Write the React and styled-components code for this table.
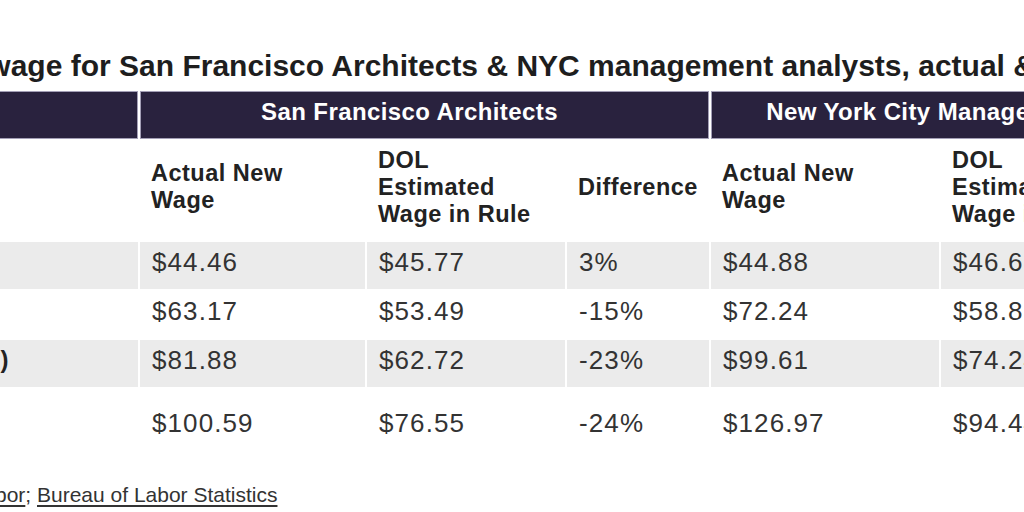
import React from "react";
import styled, { createGlobalStyle } from "styled-components";

const Global = createGlobalStyle`
  html, body { margin: 0; padding: 0; background: #fff; }
  body { width: 1024px; height: 512px; overflow: hidden; }
`;

const Page = styled.div`
  width: 1024px;
  height: 512px;
  overflow: hidden;
  padding-top: 48px;
  box-sizing: border-box;
  font-family: "Liberation Sans", Arial, sans-serif;
  color: #333;
`;

const Title = styled.h1`
  margin: 0 0 7px -116px;
  font-size: 30px;
  line-height: 36px;
  font-weight: 700;
  color: #1e1e1e;
  white-space: nowrap;
`;

const Grid = styled.div`
  display: grid;
  grid-template-columns: 335px 225px 198px 142px 228px 198px 142px;
  grid-template-rows: 48px 99px 47px 47px 47px auto;
  gap: 2px;
  margin-left: -197px;
  width: max-content;
`;

const GroupHead = styled.div`
  grid-column: span ${(p) => p.$span || 1};
  background: #29223e;
  border: 1px solid #a39fb6;
  color: #fff;
  font-size: 24px;
  letter-spacing: 0.4px;
  font-weight: 700;
  line-height: 39px;
  padding: 0 30px 7px 0;
  text-align: center;
  white-space: nowrap;
  overflow: hidden;
`;

const ColHead = styled.div`
  display: flex;
  align-items: center;
  padding: 0 8px 7px 11px;
  font-size: 23.5px;
  letter-spacing: 0.5px;
  line-height: 27px;
  font-weight: 700;
  color: #222;
`;

const Cell = styled.div`
  background: ${(p) => (p.$shade ? "#ebebeb" : "transparent")};
  padding: ${(p) => (p.$last ? "19px 12px 0" : "5px 12px 12px")};
  font-size: 26px;
  letter-spacing: 1.1px;
  line-height: 30px;
  font-weight: ${(p) => (p.$label ? 700 : 400)};
  color: ${(p) => (p.$label ? "#222" : "#333")};
  white-space: nowrap;
  overflow: hidden;
`;

const LabelCell = styled(Cell)`
  font-size: 24px;
  letter-spacing: 0;
`;

const Footer = styled.p`
  margin: 45px 0 0 -245.5px;
  font-size: 21px;
  line-height: 24px;
  color: #333;
  white-space: nowrap;
`;

const Link = styled.span`
  text-decoration: underline;
  text-underline-offset: 3px;
`;

const rows = [
  { label: "Level I", v: ["$44.46", "$45.77", "3%", "$44.88", "$46.65", "4%"] },
  { label: "Level II", v: ["$63.17", "$53.49", "-15%", "$72.24", "$58.85", "-19%"] },
  { label: "Level III (Median)", v: ["$81.88", "$62.72", "-23%", "$99.61", "$74.24", "-25%"] },
  { label: "Level IV", v: ["$100.59", "$76.55", "-24%", "$126.97", "$94.44", "-26%"] },
];

const heads = [
  ["Actual New", "Wage"],
  ["DOL", "Estimated", "Wage in Rule"],
  ["Difference"],
];

export default function App() {
  return (
    <Page>
      <Global />
      <Title>
        Hourly wage for San Francisco Architects &amp; NYC management analysts, actual &amp; estimated
      </Title>
      <Grid>
        <GroupHead />
        <GroupHead $span={3}>San Francisco Architects</GroupHead>
        <GroupHead $span={3}>New York City Management Analysts</GroupHead>
        <ColHead />
        {[...heads, ...heads].map((h, i) => (
          <ColHead key={i}>
            <div>
              {h.map((l, j) => (
                <div key={j}>{l}</div>
              ))}
            </div>
          </ColHead>
        ))}
        {rows.map((r, i) => (
          <React.Fragment key={r.label}>
            <LabelCell $label $shade={i % 2 === 0} $last={i === 3}>
              {r.label}
            </LabelCell>
            {r.v.map((v, j) => (
              <Cell key={j} $shade={i % 2 === 0} $last={i === 3}>
                {v}
              </Cell>
            ))}
          </React.Fragment>
        ))}
      </Grid>
      <Footer>
        Source: <Link>Department of Labor</Link>; <Link>Bureau of Labor Statistics</Link>
      </Footer>
    </Page>
  );
}
